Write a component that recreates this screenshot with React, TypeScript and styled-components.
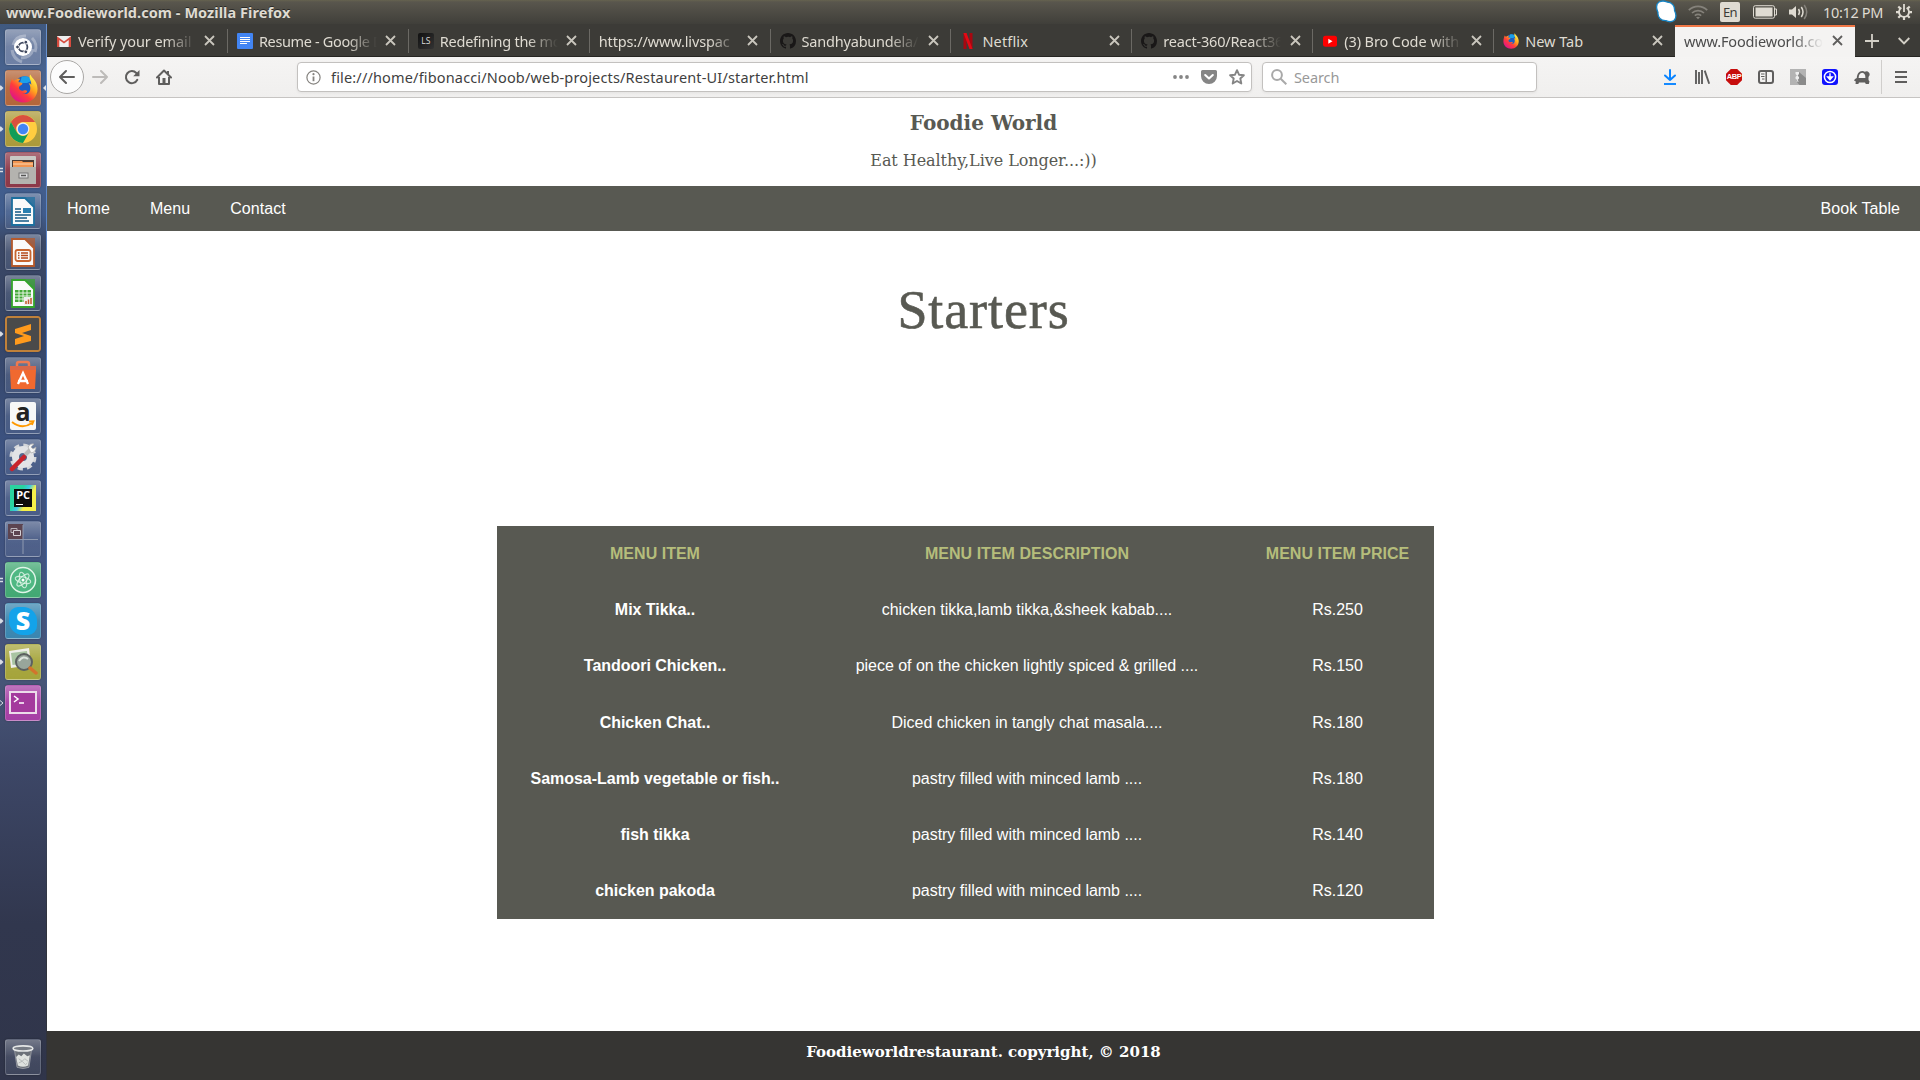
import React from 'react';
import styled, { createGlobalStyle, css } from 'styled-components';

const GlobalStyle = createGlobalStyle`
  * { box-sizing: border-box; }
  html, body { margin: 0; padding: 0; background: #fff; }
  svg { display: block; flex: none; }
`;

const uiFont = css`
  font-family: 'Noto Sans', 'Open Sans', sans-serif;
  white-space: nowrap;
`;

/* ---------- desktop shell ---------- */

const Desktop = styled.div`
  width: 1920px;
  height: 1080px;
  display: flex;
  flex-direction: column;
  overflow: hidden;
`;

const Panel = styled.header`
  height: 24px;
  flex: none;
  display: flex;
  align-items: center;
  padding: 0 8px 0 6px;
  background: linear-gradient(#66634f 0, #59564d 2px, #403f3a 100%);
`;

const WindowTitle = styled.div`
  ${uiFont}
  flex: 1;
  font-size: 14.5px;
  line-height: 24px;
  font-weight: 700;
  letter-spacing: 0.06px;
  color: #dfdbd2;
  text-shadow: 0 -1px 0 #2b2a27;
`;

const Tray = styled.div`
  display: flex;
  align-items: center;
  height: 24px;
`;

const TraySlot = styled.div<{ $w: number }>`
  width: ${(p) => p.$w}px;
  display: flex;
  justify-content: center;
  align-items: center;
`;

const LangBadge = styled.span`
  ${uiFont}
  width: 20px;
  height: 20px;
  border-radius: 2px;
  background: #dfdbd2;
  color: #3c3b37;
  font-size: 13px;
  line-height: 21px;
  letter-spacing: -0.6px;
  text-align: center;
`;

const Clock = styled.span`
  ${uiFont}
  padding-right: 4px;
  font-size: 14.5px;
  letter-spacing: -0.35px;
  color: #dfdbd2;
`;

const Workspace = styled.div`
  flex: 1;
  min-height: 0;
  display: flex;
`;

/* ---------- launcher ---------- */

const Launcher = styled.aside`
  width: 47px;
  flex: none;
  display: flex;
  flex-direction: column;
  gap: 5px;
  padding: 5px 0 5px;
  border-right: 1px solid;
  border-image: linear-gradient(#6b93d0 0, #4a78c0 420px, #405278 700px, #30333d 900px) 1;
  background: linear-gradient(
    #40597f 0,
    #4a6593 60px,
    #405c8c 190px,
    #3b4866 218px,
    #354464 300px,
    #3c5280 420px,
    #425480 560px,
    #475577 660px,
    #3d4767 740px,
    #31374e 900px,
    #30354a 100%
  );
`;

const LauncherItem = styled.div<{ $last?: boolean }>`
  display: flex;
  align-items: center;
  height: 36px;
  ${(p) => p.$last && 'margin-top: auto;'}
`;

const Pips = styled.div`
  width: 5px;
  height: 12px;
  flex: none;
`;

const Tile = styled.div<{ $bg: string; $edge?: string }>`
  width: 36px;
  height: 36px;
  flex: none;
  border-radius: 3px;
  border: 1px solid ${(p) => p.$edge ?? 'rgba(255,255,255,0.18)'};
  background: linear-gradient(rgba(255, 255, 255, 0.28), rgba(255, 255, 255, 0.04) 50%, transparent), ${(p) => p.$bg};
  box-shadow: 0 0 2px rgba(0, 0, 0, 0.35);
  display: flex;
  align-items: center;
  justify-content: center;
`;

/* ---------- browser ---------- */

const Browser = styled.main`
  flex: 1;
  min-width: 0;
  display: flex;
  flex-direction: column;
`;

const TabStrip = styled.div`
  height: 33px;
  flex: none;
  display: flex;
  background: #3c3b37;
  box-shadow: inset 0 -1px 0 #262522;
`;

const Tab = styled.div<{ $active?: boolean; $noRule?: boolean }>`
  ${uiFont}
  position: relative;
  width: ${(p) => (p.$active ? 180 : 180.9)}px;
  flex: none;
  display: flex;
  align-items: center;
  gap: 6px;
  padding: 0 10px 0 9px;
  color: ${(p) => (p.$active ? '#4c4c4c' : '#dfdbd2')};
  background: ${(p) => (p.$active ? '#f4f3f2' : 'transparent')};
  border-top: ${(p) => (p.$active ? '2px solid #f07746' : '0')};
  margin-top: ${(p) => (p.$active ? 1 : 0)}px;

  &::after {
    content: '';
    display: ${(p) => (p.$active || p.$noRule ? 'none' : 'block')};
    position: absolute;
    right: 0;
    top: 5px;
    width: 1px;
    height: 24px;
    background: #6b6964;
  }
`;

const TabLabel = styled.span<{ $fade?: boolean; $ls?: number; $up?: boolean }>`
  flex: 1;
  min-width: 0;
  font-size: 14.5px;
  line-height: 22px;
  letter-spacing: ${(p) => p.$ls ?? 0}px;
  ${(p) => p.$up && 'margin-top: -3px;'}
  ${(p) => p.$fade && 'mask-image: linear-gradient(to left, transparent 0, #000 30px);'}
`;

const CloseSlot = styled.span<{ $up?: boolean }>`
  width: 16px;
  flex: none;
  display: flex;
  justify-content: center;
  ${(p) => p.$up && 'margin-top: -3px;'}
`;

const StripButton = styled.div`
  width: 32px;
  display: flex;
  align-items: center;
  justify-content: center;
  padding-left: 2px;
`;

const NavBar = styled.div`
  height: 41px;
  flex: none;
  display: flex;
  align-items: center;
  padding: 0 3px;
  background: linear-gradient(#f5f4f3, #f0efee);
  border-bottom: 1px solid #c6c4c2;
`;

const BackButton = styled.div`
  width: 34px;
  height: 34px;
  border-radius: 50%;
  border: 1px solid #aaa8a6;
  background: #fcfcfc;
  display: flex;
  align-items: center;
  justify-content: center;
`;

const ToolButton = styled.div`
  width: 32px;
  display: flex;
  justify-content: center;
`;

const Field = styled.div<{ $w: number; $ml?: number }>`
  ${uiFont}
  width: ${(p) => p.$w}px;
  height: 30px;
  margin-left: ${(p) => p.$ml ?? 0}px;
  display: flex;
  align-items: center;
  padding: 0 0 0 8px;
  border: 1px solid #c3c1bf;
  border-radius: 4px;
  background: #fff;
  box-shadow: 0 1px 3px rgba(0, 0, 0, 0.06);
`;

const FieldText = styled.span<{ $color: string; $ls: number; $ml: number }>`
  flex: 1;
  margin-left: ${(p) => p.$ml}px;
  font-size: 14.5px;
  line-height: 28px;
  color: ${(p) => p.$color};
  letter-spacing: ${(p) => p.$ls}px;
`;

const FieldAction = styled.span`
  width: 28px;
  display: flex;
  justify-content: center;
`;

const Flex = styled.div`
  flex: 1;
`;

const MenuRule = styled.div`
  width: 1px;
  height: 34px;
  margin: 0 3px;
  background: #d0cecc;
`;

/* ---------- web page ---------- */

const Page = styled.div`
  flex: 1;
  min-height: 0;
  display: flex;
  flex-direction: column;
  background: #fff;
`;

const Masthead = styled.div`
  height: 88px;
  flex: none;
  text-align: center;
  color: #585952;
  font-family: 'DejaVu Serif', serif;
`;

const Brand = styled.h1`
  margin: 0;
  padding-top: 12px;
  font-size: 20px;
  line-height: 26px;
`;

const Tagline = styled.p`
  margin: 0;
  padding-top: 15px;
  font-size: 16px;
  line-height: 19px;
  letter-spacing: -0.06px;
`;

const SiteNav = styled.nav`
  height: 45px;
  flex: none;
  display: flex;
  background: #585952;
`;

const NavLink = styled.a<{ $end?: boolean }>`
  padding: 0 20px;
  font: 16px/45px 'Liberation Sans', Arial, sans-serif;
  letter-spacing: 0.06px;
  color: #fff;
  ${(p) => p.$end && 'margin-left: auto;'}
`;

const SectionTitle = styled.h2`
  margin: 0;
  padding-top: 47px;
  height: 295px;
  flex: none;
  text-align: center;
  font: 400 54px/64px 'Liberation Serif', serif;
  letter-spacing: 0.9px;
  -webkit-text-stroke: 0.6px #585952;
  color: #585952;
`;

const MenuTable = styled.div`
  width: 937px;
  height: 393px;
  flex: none;
  margin-left: 450px;
  display: grid;
  grid-template-rows: repeat(7, 56.17px);
  background: #585952;
`;

const MenuRow = styled.div<{ $head?: boolean }>`
  display: grid;
  grid-template-columns: 316px 428px 193px;
  align-items: center;
  text-align: center;
  font: ${(p) => (p.$head ? 700 : 400)} 16px/18px 'Liberation Sans', Arial, sans-serif;
  letter-spacing: ${(p) => (p.$head ? 0.02 : -0.03)}px;
  font-variant-ligatures: common-ligatures;
  color: ${(p) => (p.$head ? '#b5bd7b' : '#fff')};
`;

const DishName = styled.span`
  font-weight: 700;
`;

const Footer = styled.footer`
  height: 49px;
  margin-top: auto;
  background: #363533;
  color: #fff;
  text-align: center;
  font: 700 15px/42px 'DejaVu Serif', serif;
`;

/* ---------- small icons ---------- */

const Close = ({ c }: { c: string }) => (
  <svg width="11" height="11" viewBox="0 0 11 11" stroke={c} strokeWidth="1.8">
    <path d="M1 1l9 9M10 1l-9 9" />
  </svg>
);

const GmailIcon = () => (
  <svg width="16" height="16" viewBox="0 0 16 16">
    <path d="M1 3h14v11H1z" fill="#eee" />
    <path d="M1 14V3.2l7 5.4 7-5.4V14h-2.300V7L8 10.600 3.300 7v7z" fill="#d64b3e" />
  </svg>
);

const DocsIcon = () => (
  <svg width="16" height="16" viewBox="0 0 16 16">
    <rect width="16" height="16" rx="1" fill="#4285f4" />
    <path d="M3 4.500h10M3 6.500h10M3 8.500h10M3 10.500h7" stroke="#fff" />
  </svg>
);

const LsIcon = styled.span`
  width: 16px;
  height: 16px;
  flex: none;
  border-radius: 2px;
  background: linear-gradient(135deg, #111, #333);
  color: #ddd;
  font: 8.5px/16px 'Open Sans', sans-serif;
  text-align: center;
`;

const GithubIcon = () => (
  <svg width="16" height="16" viewBox="0 0 16 16" fill="#191717">
    <path d="M8 0C3.580 0 0 3.580 0 8c0 3.540 2.290 6.530 5.470 7.590.4.070.55-.170.55-.380 0-.190-.010-.820-.010-1.490-2.010.370-2.530-.490-2.690-.940-.090-.230-.480-.940-.820-1.130-.280-.150-.680-.520-.010-.530.630-.010 1.080.580 1.230.820.720 1.210 1.870.870 2.330.660.070-.520.280-.870.510-1.070-1.780-.2-3.640-.890-3.640-3.950 0-.870.310-1.590.820-2.150-.080-.2-.360-1.020.080-2.120 0 0 .670-.210 2.200.820A7.600 7.600 0 0 1 8 3.860c.680 0 1.360.090 2 .270 1.530-1.040 2.200-.820 2.200-.820.440 1.100.160 1.920.080 2.120.510.560.820 1.270.820 2.150 0 3.070-1.870 3.750-3.650 3.950.290.250.540.730.540 1.480 0 1.070-.010 1.930-.010 2.200 0 .210.150.460.550.380A8.010 8.010 0 0 0 16 8c0-4.420-3.580-8-8-8z" />
  </svg>
);

const NetflixIcon = () => (
  <svg width="16" height="16" viewBox="0 0 16 16">
    <path d="M3.500 0h3v16h-3zM9.500 0h3v16h-3z" fill="#a80710" />
    <path d="M3.500 0h3l6 16h-3z" fill="#e50914" />
  </svg>
);

const YoutubeIcon = () => (
  <svg width="16" height="16" viewBox="0 0 16 16">
    <rect x="1" y="2.700" width="14" height="11" rx="2.500" fill="#f00" />
    <path d="M6.300 5.800v5L10.500 8.300z" fill="#fff" />
  </svg>
);

const FirefoxIcon = ({ s }: { s: number }) => (
  <svg width={s} height={s} viewBox="0 0 32 32">
    <defs>
      <linearGradient id={`ff${s}`} x1="0.850" y1="0.100" x2="0.200" y2="0.900">
        <stop offset="0" stopColor="#fff14a" />
        <stop offset="0.350" stopColor="#ffa61e" />
        <stop offset="0.650" stopColor="#ff3d3a" />
        <stop offset="1" stopColor="#e11586" />
      </linearGradient>
    </defs>
    <circle cx="17" cy="14" r="11.500" fill="#1c5fc4" />
    <path d="M14 3c5-2 10 1 12 4l-6 3-8 0z" fill="#1ba0ea" />
    <path
      d="M3.500 5c.5 1.500 1.500 2.200 2.500 2.500C8 5.500 10 5 12.500 5.500c-1.500 1-2 2-2 3.500 1.500 0 3.500.3 4.500 1.500-1 2-3.500 2.500-4 4-.3 3 2.500 4.500 5 3.700 2-.7 3.500 0 4 .8-1 2.500-3.500 3-5.500 2.700 6 1.800 9.500-2 9-7.200-.2-2-1.200-3.500-2-4.200 2 .2 2.500 1 3 1.800C25 7 21 4.500 23.500.5c1.500 4 8 7 8 16C31.500 25 25 31.500 16.300 31.500S.8 25 .8 17C.8 12 2 8 3.500 5z"
      fill={`url(#ff${s})`}
    />
  </svg>
);

const SkypeTray = () => (
  <svg width="22" height="24" viewBox="0 0 22 24">
    <path
      d="M4 2c3-1.500 6-1 8 0 5 0 8 4 7.500 8.500 2 4 1.500 8-.5 10-3 2-6 1.200-8 .2-5 .3-8.500-3.500-8-8.200C1 8 1.200 4 4 2z"
      fill="#fff"
      stroke="#1684c4"
      strokeWidth="1.300"
    />
  </svg>
);

const WifiIcon = () => (
  <svg width="20" height="16" viewBox="0 0 20 16" fill="none" stroke="#85827b" strokeWidth="1.700">
    <path d="M.8 6.200C6 1 14 1 19.200 6.200M4 9c3.500-3.300 8.500-3.300 12 0" />
    <path d="M6.800 11.600c2-1.600 4.400-1.600 6.400 0" />
    <path d="M8 13.300q2-1.200 4 0L10 15.300z" fill="#85827b" stroke="none" />
  </svg>
);

const BatteryIcon = () => (
  <svg width="24" height="14" viewBox="0 0 24 14" fill="none" stroke="#dfdbd2">
    <rect x=".5" y=".7" width="21" height="12.500" rx="1.800" />
    <rect x="2.500" y="2.500" width="17" height="9" fill="#dfdbd2" stroke="none" />
    <path d="M22 4h1.500v6H22" />
  </svg>
);

const VolumeIcon = () => (
  <svg width="20" height="16" viewBox="0 0 20 16" fill="none" stroke="#dfdbd2" strokeWidth="1.500">
    <path d="M0 5.500h3L7 2v12L3 10.500H0z" fill="#dfdbd2" stroke="none" />
    <path d="M9.500 5q2 3 0 6M12.300 3q3.400 5 0 10" />
    <path d="M15.200 1q5 7 0 14" stroke="#85827b" />
  </svg>
);

const PowerGear = () => (
  <svg width="16" height="16" viewBox="0 0 16 16" fill="none" stroke="#dfdbd2">
    <path d="M5.400 3.700a5 5 0 1 0 5.200 0" strokeWidth="1.800" />
    <path d="M8 0v8" strokeWidth="1.800" />
    <path
      d="M8 13v3M0 8.200h3M13 8.200h3M2.300 2.500l2 2M13.700 2.500l-2 2M2.300 13.700l2-2M13.700 13.700l-2-2"
      strokeWidth="2.200"
    />
  </svg>
);

const Arrow = ({ flip, c }: { flip?: boolean; c: string }) => (
  <svg width="16" height="16" viewBox="0 0 16 16" fill="none" stroke={c} strokeWidth="2" strokeLinecap="round" strokeLinejoin="round">
    {flip ? <path d="M1 8h14M9 2l6 6-6 6" /> : <path d="M15 8H1M7 2L1 8l6 6" />}
  </svg>
);

const ReloadIcon = () => (
  <svg width="16" height="16" viewBox="0 0 16 16" fill="none" stroke="#5f5e5d" strokeWidth="2">
    <path d="M13.300 10.800A6 6 0 1 1 12.300 4" strokeLinecap="round" />
    <path d="M15.500 1v6.300H9.200z" fill="#5f5e5d" stroke="none" />
  </svg>
);

const HomeIcon = () => (
  <svg width="16" height="16" viewBox="0 0 16 16" fill="none" stroke="#5f5e5d" strokeWidth="2" strokeLinejoin="round">
    <path d="M1 8.500L8 1.500l7 7" strokeLinecap="round" />
    <path d="M3 8v7h10V8" />
    <path d="M6.500 9h3v6h-3z" fill="#5f5e5d" stroke="none" />
    <path d="M11 2h2v4h-2z" fill="#5f5e5d" stroke="none" />
  </svg>
);

const InfoIcon = () => (
  <svg width="15" height="15" viewBox="0 0 15 15" fill="none" stroke="#85837f">
    <circle cx="7.500" cy="7.500" r="6.600" strokeWidth="1.200" />
    <path d="M7.500 6.500v4.700" strokeWidth="1.800" />
    <circle cx="7.500" cy="4.200" r="1.100" fill="#85837f" stroke="none" />
  </svg>
);

const DotsIcon = () => (
  <svg width="16" height="16" viewBox="0 0 16 16" fill="#858585">
    <circle cx="2" cy="8" r="1.900" />
    <circle cx="8" cy="8" r="1.900" />
    <circle cx="14" cy="8" r="1.900" />
  </svg>
);

const PocketIcon = () => (
  <svg width="16" height="16" viewBox="0 0 16 16">
    <path d="M1.500 1h13A1.500 1.500 0 0 1 16 2.500V7a8 8 0 0 1-16 0V2.500A1.500 1.500 0 0 1 1.500 1z" fill="#858585" />
    <path d="M4.200 6L8 9.500 11.800 6" fill="none" stroke="#fff" strokeWidth="2.100" strokeLinecap="round" strokeLinejoin="round" />
  </svg>
);

const StarIcon = () => (
  <svg width="16" height="16" viewBox="0 0 16 16" fill="none" stroke="#858585" strokeWidth="1.900" strokeLinejoin="round">
    <path d="M8 1.200l2 4.500 4.900.5-3.600 3.300 1 5L8 12l-4.300 2.500 1-5L1.100 6.200l4.900-.5z" />
  </svg>
);

const SearchIcon = () => (
  <svg width="16" height="16" viewBox="0 0 16 16" fill="none" stroke="#a9a9a9" strokeWidth="2">
    <circle cx="6" cy="6" r="4.900" />
    <path d="M9.700 9.700l5.600 5.600" />
  </svg>
);

const DownloadIcon = () => (
  <svg width="16" height="16" viewBox="0 0 16 16" fill="none" stroke="#0a84ff" strokeWidth="2" strokeLinecap="round" strokeLinejoin="round">
    <path d="M8 1v10M3 6.500L8 11l5-4.500" />
    <path d="M2 15h12" strokeLinecap="butt" strokeWidth="1.900" />
  </svg>
);

const LibraryIcon = () => (
  <svg width="16" height="16" viewBox="0 0 16 16" fill="none" stroke="#5f5e5d" strokeWidth="1.900">
    <path d="M2 1v14M5 3v12M8 1v14M10.700 1.600L15.200 14.800" />
  </svg>
);

const AdblockBadge = styled.span`
  width: 16px;
  height: 16px;
  background: #c70d0c;
  clip-path: polygon(30% 0, 70% 0, 100% 30%, 100% 70%, 70% 100%, 30% 100%, 0 70%, 0 30%);
  color: #fff;
  font: 700 7.5px/16px 'Liberation Sans', sans-serif;
  letter-spacing: -0.4px;
  text-align: center;
`;

const SidebarIcon = () => (
  <svg width="16" height="16" viewBox="0 0 16 16" fill="none" stroke="#5f5e5d">
    <rect x="1" y="2" width="14" height="12" rx="2" strokeWidth="2" />
    <path d="M8.200 2v12" strokeWidth="1.500" />
    <path d="M3 5h3.500M3 7.500h3.500M4 10h2.500" />
  </svg>
);

const ZipIcon = () => (
  <svg width="16" height="16" viewBox="0 0 16 16">
    <path d="M0 0h16v16H0z" fill="#b3b3b3" />
    <path d="M9 3l7 6v7H9.500L6 12z" fill="#8a8a8a" />
    <path d="M5.500 3h3.500v2L7.500 6.500 9 8v1.500L7.500 11 9 12.500H6L7 11 5.500 9.500V8L7 6.500 5.500 5z" fill="#eee" />
  </svg>
);

const BlueDownload = () => (
  <svg width="16" height="16" viewBox="0 0 16 16" fill="none" stroke="#fff">
    <rect width="16" height="16" rx="3" fill="#0f12ff" stroke="none" />
    <circle cx="8" cy="8" r="5.600" strokeWidth="1.500" />
    <path d="M8 4.300v5M5.700 8L8 10.700 10.300 8z" fill="#fff" strokeWidth="1.400" />
  </svg>
);

const TurtleIcon = () => (
  <svg width="16" height="15" viewBox="0 0 16 15">
    <path
      d="M2.800 8C3 4 5 1 8.200 1q1.600 0 2.600.8 1.200-.8 3-.3Q16 2.500 15.700 5l-1.200 2v3l1 1.500-.7 2.500h-3l-.8-1.500H5L4.300 14H1.500l.3-2.500L0 10.500 1 9z"
      fill="#5f5e5d"
    />
    <path d="M4.600 8Q4.800 3 8.200 2.700 11.500 3 11.400 8z" fill="#f4f3f2" />
  </svg>
);

const BurgerIcon = () => (
  <svg width="12" height="14" viewBox="0 0 12 14" stroke="#5f5e5d" strokeWidth="2">
    <path d="M0 2h12M0 7h12M0 12h12" />
  </svg>
);

/* ---------- launcher art ---------- */

const UbuntuArt = () => (
  <svg width="34" height="34" viewBox="0 0 34 34" fill="none">
    <path d="M7 15q3-10 13-9M27 19q-2 9-12 9M26 8q6 6 3 14M6 20q1 9 10 12" stroke="#fff" strokeOpacity=".3" strokeWidth="3" />
    <circle cx="17" cy="17" r="9" fill="#fff" />
    <circle cx="17" cy="17" r="4.400" stroke="#40495f" strokeWidth="1.800" />
    <g fill="#40495f" stroke="#fff">
      <circle cx="11.500" cy="17" r="1.900" />
      <circle cx="19.800" cy="12.200" r="1.900" />
      <circle cx="19.800" cy="21.800" r="1.900" />
    </g>
  </svg>
);

const ChromeArt = () => (
  <svg width="28" height="28" viewBox="0 0 28 28">
    <circle cx="14" cy="14" r="14" fill="#ffcd40" />
    <path d="M1.900 7A14 14 0 0 1 26.100 7H14a7 7 0 0 0-6 10.500z" fill="#d9503f" />
    <path d="M1.900 7A14 14 0 0 0 14 28l6-10.500a7 7 0 0 1-12 0z" fill="#0f9d58" />
    <circle cx="14" cy="14" r="6.400" fill="#eee" />
    <circle cx="14" cy="14" r="5.200" fill="#4285f4" />
  </svg>
);

const FilesArt = () => (
  <svg width="28" height="30" viewBox="0 0 28 30">
    <rect x="1" y="1" width="26" height="28" rx="1" fill="#c9c8c4" />
    <path d="M3 5h22v9H3z" fill="#4a3a32" />
    <path d="M4 6h9l1 1h10v7H4z" fill="#f09450" />
    <path d="M4 9h20" stroke="#fbd6b0" />
    <path d="M1 12h26v16q0 1-1 1H2q-1 0-1-1z" fill="#b4b3af" />
    <rect x="10" y="18" width="9" height="5" fill="#ddd" stroke="#777" />
    <path d="M12 20.500h5" stroke="#555" strokeWidth="1.500" />
  </svg>
);

const DocArt = ({ c, children }: { c: string; children: React.ReactNode }) => (
  <svg width="26" height="31" viewBox="0 0 26 31">
    <path d="M2 2h13l9 9v18H2z" fill="#fafafa" stroke={c} strokeWidth="1.800" />
    <path d="M15 1h10v11z" fill={c} opacity=".7" />
    {children}
  </svg>
);

const SublimeArt = () => (
  <svg width="34" height="34" viewBox="0 0 34 34">
    <rect width="34" height="34" rx="2" fill="#4a4a4a" stroke="#c0813a" strokeWidth="2" />
    <path d="M9 12l16-5v6l-9 3 9 3v5L9 28v-6l9-3-9-3z" fill="#ff9a1c" />
  </svg>
);

const SoftwareArt = () => (
  <svg width="28" height="30" viewBox="0 0 28 30" fill="none">
    <path d="M8 9V4q0-2 2-2h8q2 0 2 2v5" stroke="#ee7a50" strokeWidth="2.500" />
    <path d="M1 6h26v5H1z" fill="#d8684a" />
    <path d="M1 10h26l-1 19H2z" fill="#f0692f" />
    <path d="M9 24l5-11 5 11M9 21h10" stroke="#fff" strokeWidth="2.300" />
  </svg>
);

const AmazonArt = styled.div`
  width: 26px;
  height: 28px;
  background: #f7f7f7;
  border-radius: 2px;
  display: flex;
  flex-direction: column;
  align-items: center;
  font: 700 25px/18px 'Open Sans', sans-serif;
  color: #222;
`;

const AmazonSmile = () => (
  <svg width="24" height="8" viewBox="0 0 24 8" fill="none" stroke="#ff9900" strokeWidth="1.800">
    <path d="M1 2q10 8 20 1M18 1.500l4.500-.3L21 5" />
  </svg>
);

const SettingsArt = () => (
  <svg width="30" height="30" viewBox="0 0 30 30" fill="none">
    <circle cx="15" cy="15" r="11.500" stroke="#d4d6da" strokeWidth="4" strokeDasharray="5 4.030" />
    <circle cx="15" cy="15" r="7.500" stroke="#e2e3e6" strokeWidth="7" />
    <path d="M17 13l6-6" stroke="#bbb" strokeWidth="4" />
    <path d="M20 5q2-4 6-3l-3 3 2 2 3-2q0 5-5 6z" fill="#f4f4f4" stroke="#aaa" strokeWidth=".7" />
    <path d="M4 27l12-12" stroke="#c8232c" strokeWidth="4.500" strokeLinecap="round" />
  </svg>
);

const PycharmArt = styled.div`
  width: 26px;
  height: 26px;
  padding: 4px;
  background: linear-gradient(120deg, #2ad3a0 35%, #3ec7e8 50%, #f5ef4a 65%);
`;

const PycharmText = styled.div`
  height: 18px;
  background: #0c0c0c;
  color: #fff;
  font: 700 11px/12px 'Open Sans', sans-serif;
  letter-spacing: -0.3px;
  text-align: center;
`;

const PycharmBar = styled.div`
  width: 7px;
  height: 1px;
  margin: 3px 0 0 2px;
  background: #fff;
`;

const SwitcherArt = () => (
  <svg width="34" height="34" viewBox="0 0 34 34" fill="none">
    <path d="M2 2h15v15H2z" fill="#5c4450" />
    <path d="M17 3v29M2 17.500h30" stroke="#8f9ab0" />
    <path d="M5 6.500h6v4H5z" stroke="#b8b3ba" />
    <path d="M7.500 8.500h7v5h-7z" fill="#5c4450" stroke="#d5d0d5" />
  </svg>
);

const AtomArt = () => (
  <svg width="28" height="28" viewBox="0 0 28 28" fill="none" stroke="#dff5e8">
    <circle cx="14" cy="14" r="12.500" fill="#4fb883" strokeWidth="1.500" />
    <g strokeWidth="1.100" strokeOpacity=".85">
      <ellipse cx="14" cy="14" rx="8" ry="3.200" transform="rotate(15 14 14)" />
      <ellipse cx="14" cy="14" rx="8" ry="3.200" transform="rotate(75 14 14)" />
      <ellipse cx="14" cy="14" rx="8" ry="3.200" transform="rotate(135 14 14)" />
    </g>
    <circle cx="14" cy="14" r="1.500" fill="#fff" stroke="none" />
  </svg>
);

const SkypeBlob = styled.div`
  width: 28px;
  height: 28px;
  border-radius: 9px 14px 9px 14px;
  background: #13a3ea;
  color: #fff;
  font: 800 25px/27px 'Open Sans', sans-serif;
  text-align: center;
`;

const ViewerArt = () => (
  <svg width="30" height="30" viewBox="0 0 30 30">
    <path d="M1 4l20-3 2 17-20 3z" fill="#efefea" />
    <path d="M3 6l16-2 1.500 12-16 2z" fill="#a9c4a2" />
    <circle cx="16" cy="15" r="8" fill="#98a59b" stroke="#5c6060" strokeWidth="2" />
    <path d="M11 14q4-6 9-2" stroke="#dfe6e0" strokeWidth="2" fill="none" />
    <path d="M22 21l6 5" stroke="#d2742c" strokeWidth="3.500" strokeLinecap="round" />
  </svg>
);

const TerminalArt = () => (
  <svg width="28" height="24" viewBox="0 0 28 24">
    <rect x="1" y="1" width="26" height="21" fill="#a43a9d" stroke="#ecdcea" strokeWidth="2" />
    <path d="M5 5l4 3-4 3M10 12h5" stroke="#fff" strokeWidth="1.500" fill="none" />
  </svg>
);

const TrashArt = () => (
  <svg width="24" height="28" viewBox="0 0 28 30">
    <path d="M4 6h20l-3 21q-7 3-14 0z" fill="#6b7078" stroke="#9a9ea6" />
    <path d="M6 15l3-3 3 2 3-3 4 3 3-1-2 12q-6 3-12 0z" fill="#dfe2df" />
    <path d="M9 17l4 3 3-3 4 3M9 22l4-2 4 4 2-2" stroke="#aeb2b2" fill="none" />
    <ellipse cx="14" cy="5" rx="11.500" ry="3" fill="#767b84" stroke="#e4e6e6" strokeWidth="1.800" />
  </svg>
);

type Pip = 'one' | 'two' | 'open';

const PipMark = ({ kind }: { kind?: Pip }) => (
  <Pips>
    <svg width="5" height="12" viewBox="0 0 5 12" fill="#d8dce4">
      {kind === 'one' && <path d="M0 3.500h1L3.500 6 1 8.500H0z" />}
      {kind === 'two' && <path d="M0 3.700h3v1.600H0zM0 6.700h3v1.600H0z" />}
      {kind === 'open' && <path d="M0 3.500L3 6 0 8.500" fill="none" stroke="#d8dce4" />}
    </svg>
  </Pips>
);

const FocusMark = () => (
  <svg width="5" height="8" viewBox="0 0 5 8">
    <path d="M5 1L2 4l3 3z" fill="#e2e5ea" />
  </svg>
);

const glass = 'rgba(120,135,165,0.2)';

const apps: { id: string; bg: string; edge?: string; pip?: Pip; focus?: boolean; art: React.ReactNode }[] = [
  { id: 'dash', bg: 'rgba(150,160,190,0.5)', art: <UbuntuArt /> },
  { id: 'firefox', bg: '#b4663a', pip: 'one', focus: true, art: <FirefoxIcon s={29} /> },
  { id: 'chrome', bg: '#ac9a3a', pip: 'one', art: <ChromeArt /> },
  { id: 'files', bg: '#8d3848', pip: 'two', art: <FilesArt /> },
  {
    id: 'writer',
    bg: glass,
    art: (
      <DocArt c="#1c6f9e">
        <path d="M5 13h6M5 16h6M5 19h16M5 22h12M5 25h14" stroke="#155a85" strokeWidth="1.500" />
        <path d="M13 12h8v5h-8z" fill="#2a7fb0" />
      </DocArt>
    ),
  },
  {
    id: 'impress',
    bg: glass,
    art: (
      <DocArt c="#b5592b">
        <rect x="5.500" y="13" width="15" height="11" rx="2" fill="none" stroke="#c8652f" strokeWidth="1.800" />
        <path d="M8 16h1.500M11 16h7M8 18.500h1.500M11 18.500h7M8 21h1.500M11 21h7" stroke="#b5491b" strokeWidth="1.300" />
      </DocArt>
    ),
  },
  {
    id: 'calc',
    bg: glass,
    art: (
      <DocArt c="#35a52c">
        <path d="M5 12h16v12H5z" fill="#43a837" />
        <path d="M5 15h16M5 18h16M5 21h16M9 12v12M13 12v12M17 12v12" stroke="#e7f5e4" />
        <path d="M14 19h9v8h-9z" fill="#eee" />
        <path d="M16 26v-3M18.500 26v-4.500M21 26v-6" stroke="#c4582a" strokeWidth="1.500" />
      </DocArt>
    ),
  },
  { id: 'sublime', bg: '#4a4a4a', edge: '#c0813a', pip: 'one', art: <SublimeArt /> },
  { id: 'software', bg: glass, art: <SoftwareArt /> },
  {
    id: 'amazon',
    bg: glass,
    art: (
      <AmazonArt>
        a
        <AmazonSmile />
      </AmazonArt>
    ),
  },
  { id: 'settings', bg: glass, art: <SettingsArt /> },
  {
    id: 'pycharm',
    bg: glass,
    art: (
      <PycharmArt>
        <PycharmText>
          PC
          <PycharmBar />
        </PycharmText>
      </PycharmArt>
    ),
  },
  { id: 'workspaces', bg: glass, art: <SwitcherArt /> },
  { id: 'atom', bg: '#42a873', pip: 'two', art: <AtomArt /> },
  { id: 'skype', bg: '#3a86b0', pip: 'one', art: <SkypeBlob>S</SkypeBlob> },
  { id: 'viewer', bg: '#a5a43a', pip: 'one', art: <ViewerArt /> },
  { id: 'terminal', bg: '#a63fa5', pip: 'open', art: <TerminalArt /> },
];

const tabs: { label: string; icon?: React.ReactNode; fade?: boolean; ls: number }[] = [
  { label: 'Verify your email i', icon: <GmailIcon />, fade: true, ls: -0.08 },
  { label: 'Resume - Google D', icon: <DocsIcon />, fade: true, ls: -0.35 },
  { label: 'Redefining the mo', icon: <LsIcon>LS</LsIcon>, fade: true, ls: -0.25 },
  { label: 'https://www.livspac', fade: true, ls: -0.12 },
  { label: 'Sandhyabundela/', icon: <GithubIcon />, fade: true, ls: -0.2 },
  { label: 'Netflix', icon: <NetflixIcon />, ls: 0.15 },
  { label: 'react-360/React36', icon: <GithubIcon />, fade: true, ls: -0.2 },
  { label: '(3) Bro Code with', icon: <YoutubeIcon />, fade: true, ls: -0.1 },
  { label: 'New Tab', icon: <FirefoxIcon s={16} />, ls: 0 },
];

const dishes = [
  ['Mix Tikka..', 'chicken tikka,lamb tikka,&sheek kabab....', 'Rs.250'],
  ['Tandoori Chicken..', 'piece of on the chicken lightly spiced & grilled ....', 'Rs.150'],
  ['Chicken Chat..', 'Diced chicken in tangly chat masala....', 'Rs.180'],
  ['Samosa-Lamb vegetable or fish..', 'pastry filled with minced lamb ....', 'Rs.180'],
  ['fish tikka', 'pastry filled with minced lamb ....', 'Rs.140'],
  ['chicken pakoda', 'pastry filled with minced lamb ....', 'Rs.120'],
];

const toolbarIcons = [
  <DownloadIcon />,
  <LibraryIcon />,
  <AdblockBadge>ABP</AdblockBadge>,
  <SidebarIcon />,
  <ZipIcon />,
  <BlueDownload />,
  <TurtleIcon />,
];

export default function App() {
  return (
    <Desktop>
      <GlobalStyle />
      <Panel>
        <WindowTitle>www.Foodieworld.com - Mozilla Firefox</WindowTitle>
        <Tray>
          <TraySlot $w={32}><SkypeTray /></TraySlot>
          <TraySlot $w={32}><WifiIcon /></TraySlot>
          <TraySlot $w={32}><LangBadge>En</LangBadge></TraySlot>
          <TraySlot $w={38}><BatteryIcon /></TraySlot>
          <TraySlot $w={30}><VolumeIcon /></TraySlot>
          <TraySlot $w={82}><Clock>10:12 PM</Clock></TraySlot>
          <TraySlot $w={16}><PowerGear /></TraySlot>
        </Tray>
      </Panel>
      <Workspace>
        <Launcher>
          {apps.map((a) => (
            <LauncherItem key={a.id}>
              <PipMark kind={a.pip} />
              <Tile $bg={a.bg} $edge={a.edge}>{a.art}</Tile>
              {a.focus && <FocusMark />}
            </LauncherItem>
          ))}
          <LauncherItem $last>
            <PipMark />
            <Tile $bg={glass}><TrashArt /></Tile>
          </LauncherItem>
        </Launcher>
        <Browser>
          <TabStrip>
            {tabs.map((t, i) => (
              <Tab key={t.label} $noRule={i === tabs.length - 1}>
                {t.icon}
                <TabLabel $fade={t.fade} $ls={t.ls}>{t.label}</TabLabel>
                <CloseSlot><Close c="#c9c6bd" /></CloseSlot>
              </Tab>
            ))}
            <Tab $active>
              <TabLabel $fade $up $ls={-0.15}>www.Foodieworld.co</TabLabel>
              <CloseSlot $up><Close c="#5f5e5d" /></CloseSlot>
            </Tab>
            <StripButton>
              <svg width="14" height="14" viewBox="0 0 14 14" stroke="#d3d0c7" strokeWidth="1.800">
                <path d="M7 0v14M0 7h14" />
              </svg>
            </StripButton>
            <StripButton>
              <svg width="12" height="8" viewBox="0 0 12 8" fill="none" stroke="#d3d0c7" strokeWidth="1.900">
                <path d="M.7 1L6 6.500 11.300 1" />
              </svg>
            </StripButton>
          </TabStrip>
          <NavBar>
            <BackButton><Arrow c="#5f5e5d" /></BackButton>
            <ToolButton><Arrow flip c="#bdbbb9" /></ToolButton>
            <ToolButton><ReloadIcon /></ToolButton>
            <ToolButton><HomeIcon /></ToolButton>
            <Field $w={955} $ml={117}>
              <InfoIcon />
              <FieldText $color="#3f3f3f" $ls={0.16} $ml={10}>
                file:///home/fibonacci/Noob/web-projects/Restaurent-UI/starter.html
              </FieldText>
              <FieldAction><DotsIcon /></FieldAction>
              <FieldAction><PocketIcon /></FieldAction>
              <FieldAction><StarIcon /></FieldAction>
            </Field>
            <Field $w={275} $ml={10}>
              <SearchIcon />
              <FieldText $color="#999" $ls={-0.1} $ml={7}>Search</FieldText>
            </Field>
            <Flex />
            {toolbarIcons.map((icon, i) => (
              <ToolButton key={i}>{icon}</ToolButton>
            ))}
            <MenuRule />
            <ToolButton><BurgerIcon /></ToolButton>
          </NavBar>
          <Page>
            <Masthead>
              <Brand>Foodie World</Brand>
              <Tagline>Eat Healthy,Live Longer...:))</Tagline>
            </Masthead>
            <SiteNav>
              <NavLink>Home</NavLink>
              <NavLink>Menu</NavLink>
              <NavLink>Contact</NavLink>
              <NavLink $end>Book Table</NavLink>
            </SiteNav>
            <SectionTitle>Starters</SectionTitle>
            <MenuTable>
              <MenuRow $head>
                <span>MENU ITEM</span>
                <span>MENU ITEM DESCRIPTION</span>
                <span>MENU ITEM PRICE</span>
              </MenuRow>
              {dishes.map(([name, text, price]) => (
                <MenuRow key={name}>
                  <DishName>{name}</DishName>
                  <span>{text}</span>
                  <span>{price}</span>
                </MenuRow>
              ))}
            </MenuTable>
            <Footer>Foodieworldrestaurant. copyright, © 2018</Footer>
          </Page>
        </Browser>
      </Workspace>
    </Desktop>
  );
}
